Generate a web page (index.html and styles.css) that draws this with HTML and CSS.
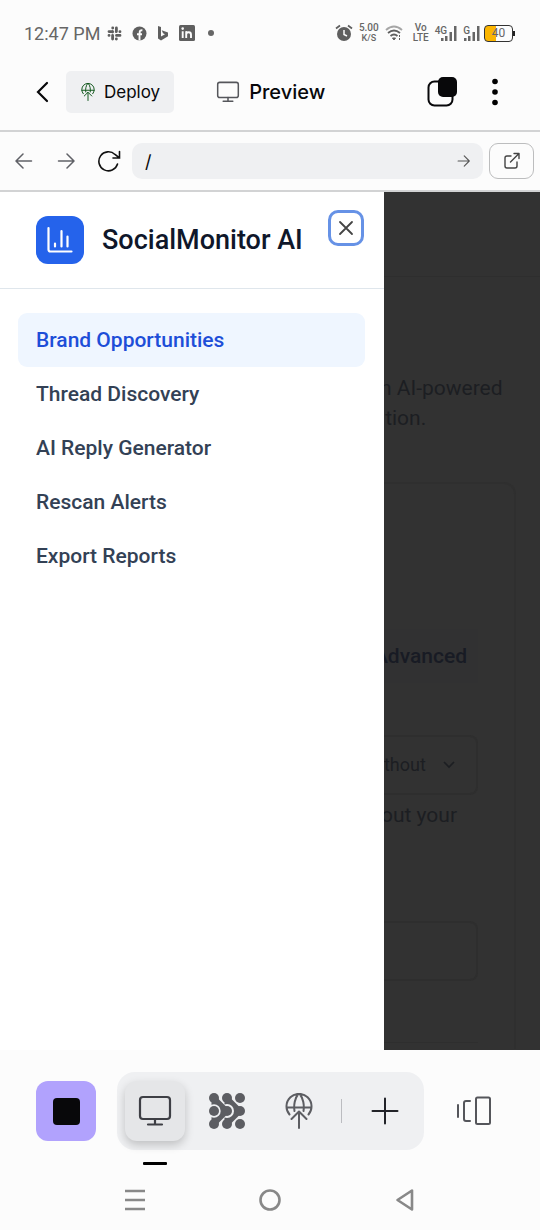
FILE: index.html
```html
<!DOCTYPE html>
<html lang="en">
<head>
<meta charset="utf-8">
<meta name="viewport" content="width=device-width, initial-scale=1">
<title>SocialMonitor AI</title>
<link rel="stylesheet" href="styles.css">
</head>
<body>
<svg class="defs" aria-hidden="true">
  <symbol id="monitor" viewBox="0 0 34 32"><g fill="none" stroke="currentColor" stroke-width="2.200" stroke-linecap="round"><rect x="2" y="2" width="30" height="22" rx="3"/><path d="M17 24v5M10 29.500h14"/></g></symbol>
  <symbol id="globe" viewBox="0 0 28 36"><g fill="none" stroke="currentColor" stroke-width="2" stroke-linecap="round" stroke-linejoin="round"><path d="M4.500 21.500A12.500 12.500 0 1 1 23.500 21.500M1.500 14.500h25M9.500 18C8.500 12 10 5 13 1.500M18.500 18C19.500 12 18 5 15 1.500M14 35V19M6.500 26l7.500-7.500 7.500 7.500"/></g></symbol>
  <symbol id="arrow" viewBox="0 0 18 16"><path d="M1.500 8h15M10 1l7 7-7 7" fill="none" stroke="currentColor" stroke-width="1.500" stroke-linecap="round" stroke-linejoin="round"/></symbol>
</svg>

<div class="status">
  <div class="status-side">
    <span class="clock">12:47 PM</span>
    <svg width="15" height="15" viewBox="0 0 15 15" fill="none" stroke="currentColor" stroke-width="2.800" stroke-linecap="round"><path d="M5.600 5.600V6M2 5.600h3.500M5.700 2h.1M9.400 2v3.500M9.300 5.700h-.1M13 5.700h-.1M13 9.400H9.500M9.400 13h-.1M5.600 13V9.500M2 9.400h.1"/></svg>
    <svg width="15" height="15" viewBox="0 0 15 15"><circle cx="7.500" cy="7.500" r="7" fill="currentColor"/><path d="M7.500 14.500V8M5 8.200h5M7.700 8V6q0-2 2.700-1.700" fill="none" stroke="#fcfcfc" stroke-width="1.900"/></svg>
    <svg width="12" height="15" viewBox="0 0 12 15"><path d="M1 0l3 1v9.500l4-2.200-2-1-1.300-3L11 6.500v3.800L4 14.500l-3-2z" fill="currentColor"/></svg>
    <svg width="16" height="16" viewBox="0 0 16 16"><rect width="16" height="16" rx="1.500" fill="currentColor"/><path d="M3.700 6.200V13M7.200 6.200V13M7.200 9.500q0-2.300 2.600-2.300 2.200 0 2.200 2.500V13" fill="none" stroke="#fcfcfc" stroke-width="1.900"/><circle cx="3.700" cy="3.600" r="1.300" fill="#fcfcfc"/></svg>
    <i class="dot"></i>
  </div>
  <div class="status-side status-right">
    <svg width="18" height="18" viewBox="0 0 18 18"><circle cx="9" cy="10" r="7" fill="currentColor"/><path d="M1 4.500l4-3M17 4.500l-4-3" stroke="currentColor" stroke-width="1.800"/><path d="M9 6v4.500l3 1.500" fill="none" stroke="#fcfcfc" stroke-width="1.500"/></svg>
    <span class="tiny"><b>5.00</b><b class="unit">K/S</b></span>
    <svg width="18" height="16" viewBox="0 0 18 16" fill="none" stroke="currentColor" stroke-width="1.800"><path d="M1 5q8-7 16 0" opacity=".55"/><path d="M3 8q6-5 12 0M5.500 11q3.500-3 7 0"/><path d="M7.500 13h3L9 15zM14.500 10v2M14.500 13v2" fill="currentColor" stroke-width="1"/></svg>
    <span class="tiny volte"><b>Vo</b><b>LTE</b></span>
    <span class="signal"><b>4G</b><svg width="18" height="15" viewBox="0 0 18 15" fill="currentColor"><path d="M2 12h2.500v3H2zM6 10h2.500v5H6zM10.500 6H13v9h-2.500zM15 0h2.500v15H15z"/></svg></span>
    <span class="signal"><b>G</b><svg width="18" height="15" viewBox="0 0 18 15" fill="currentColor"><path d="M2 12h2.500v3H2zM6 10h2.500v5H6zM10.500 6H13v9h-2.500zM15 0h2.500v15H15z"/></svg></span>
    <span class="battery">40</span>
  </div>
</div>

<header class="topbar">
  <button class="plain back" aria-label="Back"><svg width="14" height="22" viewBox="0 0 14 22"><path d="M12 2L3 11l9 9" fill="none" stroke="#08080a" stroke-width="2.200" stroke-linecap="round"/></svg></button>
  <button class="deploy"><svg class="deploy-icon" viewBox="0 0 28 36"><use href="#globe"/></svg>Deploy</button>
  <button class="plain preview"><svg width="24" height="22"><use href="#monitor"/></svg>Preview</button>
  <button class="plain tabs" aria-label="Tabs"><svg width="30" height="30" viewBox="0 0 30 30"><rect x="1.500" y="4.500" width="24" height="24" rx="6" fill="none" stroke="#08080a" stroke-width="2"/><rect x="11" y="0" width="19" height="20" rx="5" fill="#08080a"/></svg></button>
  <button class="plain" aria-label="More"><svg width="8" height="28" viewBox="0 0 8 28"><circle cx="4" cy="3.500" r="2.800"/><circle cx="4" cy="14" r="2.800"/><circle cx="4" cy="24.500" r="2.800"/></svg></button>
</header>

<form class="browserbar">
  <button type="button" class="plain nav-arrow" aria-label="Previous page"><svg class="flip" width="18" height="16"><use href="#arrow"/></svg></button>
  <button type="button" class="plain nav-arrow" aria-label="Next page"><svg width="18" height="16"><use href="#arrow"/></svg></button>
  <button type="button" class="plain reload" aria-label="Reload"><svg width="24" height="22" viewBox="0 0 24 22" fill="none" stroke="#111" stroke-width="1.600" stroke-linecap="round"><path d="M20.500 14A9.500 9.500 0 1 1 18 4.500L22.500 8M22.500 1.500V8H16"/></svg></button>
  <div class="address">
    <input type="text" value="/" aria-label="Address">
    <button type="button" class="plain go" aria-label="Go"><svg width="13" height="12"><use href="#arrow"/></svg></button>
  </div>
  <button type="button" class="external" aria-label="Open in new window"><svg width="18" height="18" viewBox="0 0 18 18" fill="none" stroke="#444" stroke-width="1.400" stroke-linecap="round" stroke-linejoin="round"><path d="M8 4H4a2 2 0 0 0-2 2v8a2 2 0 0 0 2 2h8a2 2 0 0 0 2-2v-4M7.500 10L16 1.500M11 1.500h5v5"/></svg></button>
</form>

<div class="stage">
  <aside class="drawer">
    <div class="brand">
      <span class="logo"><svg width="28" height="28" viewBox="0 0 28 28" fill="none" stroke="#fff" stroke-width="2.200" stroke-linecap="round" stroke-linejoin="round"><path d="M2.500 2v21.500a2 2 0 0 0 2 2H25.500M9 17.500v3M15.500 5v15.500M21.500 10.500v10"/></svg></span>
      <h1>SocialMonitor AI</h1>
      <button class="close" aria-label="Close menu"><svg width="16" height="16" viewBox="0 0 16 16"><path d="M2 2l12 12M14 2L2 14" stroke="#444" stroke-width="1.800" stroke-linecap="round"/></svg></button>
    </div>
    <nav class="menu">
      <a class="active" href="#">Brand Opportunities</a>
      <a href="#">Thread Discovery</a>
      <a href="#">AI Reply Generator</a>
      <a href="#">Rescan Alerts</a>
      <a href="#">Export Reports</a>
    </nav>
  </aside>
  <main class="page">
    <div class="page-head"></div>
    <p class="intro">n AI-powered<br>&nbsp;tion.</p>
    <section class="card">
      <span class="tab">Advanced</span>
      <div class="field select"><span>thout</span><svg width="14" height="10" viewBox="0 0 14 10"><path d="M2 2l5 5 5-5" fill="none" stroke="currentColor" stroke-width="1.600"/></svg></div>
      <p class="hint">out your</p>
      <div class="field"></div>
      <hr>
    </section>
  </main>
</div>

<footer class="dock">
  <button class="stop" aria-label="Stop"><i></i></button>
  <div class="tools">
    <button class="tool selected" aria-label="Preview"><svg width="34" height="32"><use href="#monitor"/></svg></button>
    <button class="tool" aria-label="Agent"><svg width="36" height="36" viewBox="0 0 36 36" fill="currentColor">
      <path d="M18 5l13 13-13 13z" stroke="currentColor" stroke-width="5" stroke-linejoin="round"/>
      <circle cx="18" cy="18" r="7" fill="#eff0f2"/>
      <path d="M5 5l13 13L5 31z" stroke="currentColor" stroke-width="5" stroke-linejoin="round"/>
      <circle cx="5" cy="18" r="6.700" fill="#eff0f2"/>
      <path d="M0 9h2v18H0z" fill="#eff0f2"/>
      <circle cx="5" cy="5" r="5"/><circle cx="18" cy="5" r="5"/><circle cx="31" cy="5" r="5"/><circle cx="5" cy="18" r="5"/><circle cx="18" cy="18" r="5"/><circle cx="31" cy="18" r="5"/><circle cx="5" cy="31" r="5"/><circle cx="18" cy="31" r="5"/><circle cx="31" cy="31" r="5"/>
    </svg></button>
    <button class="tool" aria-label="Deploy"><svg width="28" height="36"><use href="#globe"/></svg></button>
    <span class="divider"></span>
    <button class="tool add" aria-label="Add"><svg width="28" height="28" viewBox="0 0 28 28"><path d="M14 1.500v25M1.500 14h25" stroke="#222329" stroke-width="2" stroke-linecap="round"/></svg></button>
  </div>
  <button class="plain panes" aria-label="Switch panes"><svg width="36" height="30" viewBox="0 0 36 30" fill="none" stroke="#55565b" stroke-width="2" stroke-linecap="round" stroke-linejoin="round"><path d="M2 9v12M14 5H10a2 2 0 0 0-2 2v16a2 2 0 0 0 2 2h4"/><rect x="20" y="1.500" width="14" height="26.500" rx="1.500"/></svg></button>
</footer>
<div class="indicator"></div>
<div class="system">
  <button class="plain" aria-label="Recent apps"><svg width="20" height="24" viewBox="0 0 20 24"><path d="M0 3h20M0 12h20M0 21h20" stroke="#888" stroke-width="2.600"/></svg></button>
  <button class="plain" aria-label="Home"><svg width="24" height="24" viewBox="0 0 24 24"><circle cx="12" cy="12" r="9.500" fill="none" stroke="#888" stroke-width="2.600"/></svg></button>
  <button class="plain" aria-label="Back"><svg width="20" height="24" viewBox="0 0 20 24"><path d="M17 2.500v19L2.500 12z" fill="none" stroke="#888" stroke-width="2.600" stroke-linejoin="round"/></svg></button>
</div>
</body>
</html>
```
FILE: styles.css
```css
* { box-sizing: border-box; }
body {
  margin: 0;
  min-height: 100vh;
  display: flex;
  flex-direction: column;
  background: #fcfcfc;
  color: #08080a;
  font-family: Roboto, "Liberation Sans", sans-serif;
}
h1, p { margin: 0; }
button, input { font: inherit; color: inherit; }
button { border: 0; padding: 0; cursor: pointer; }
svg { display: block; flex: none; }
.defs { position: absolute; width: 0; height: 0; }
.plain { background: none; display: flex; align-items: center; justify-content: center; }

.status {
  height: 66px;
  padding: 0 27px 0 24px;
  display: flex;
  align-items: center;
  justify-content: space-between;
  color: #666;
}
.status-side { display: flex; align-items: center; gap: 10px; }
.clock { font-size: 18px; margin-right: -3px; }
.status-side > svg { color: #5f5f5f; }
.dot { width: 6px; height: 6px; border-radius: 50%; background: #666; margin-left: 3px; }
.status-right { gap: 6px; }
.tiny { display: flex; flex-direction: column; font-size: 10px; line-height: 10px; text-align: center; }
.tiny b { font-weight: 500; }
.tiny .unit { font-size: 9px; }
.volte { margin-left: 4px; }
.signal { display: flex; align-items: flex-end; }
.signal b { font-size: 10px; line-height: 10px; font-weight: 500; align-self: flex-start; margin-right: -8px; }
.battery {
  position: relative;
  width: 29px;
  height: 17px;
  margin-left: -2px;
  border: 1px solid #333;
  border-radius: 4px;
  background: linear-gradient(90deg, #fbb500 40%, #fcfcfc 40%);
  font-size: 12px;
  line-height: 15px;
  text-align: center;
}
.battery::after { content: ""; position: absolute; right: -3px; top: 5px; width: 2px; height: 5px; background: #222; }

.topbar { height: 64px; padding: 0 41px 12px 34px; display: flex; align-items: center; }
.back { width: 16px; }
.deploy {
  margin-left: 16px;
  height: 42px;
  padding: 0 14px;
  display: flex;
  align-items: center;
  gap: 8px;
  border-radius: 5px;
  background: #eff0f2;
  font-family: Inter, sans-serif;
  font-size: 17px;
}
.deploy-icon { width: 16px; height: 18px; color: #14591f; }
.preview { margin-left: 42px; gap: 9px; font: 500 20px Inter, sans-serif; }
.preview svg { color: #55565b; }
.tabs { margin-left: auto; margin-right: 34px; }

.browserbar {
  height: 62px;
  padding: 0 6px 0 15px;
  display: flex;
  align-items: center;
  border: solid #d2d3d4;
  border-width: 2px 0;
}
.nav-arrow { width: 18px; margin-right: 24px; color: #606167; }
.flip { transform: scaleX(-1); }
.reload { margin-right: 11px; margin-left: -2px; }
.address {
  flex: 1;
  min-width: 0;
  height: 36px;
  padding: 0 13px;
  display: flex;
  align-items: center;
  border-radius: 10px;
  background: #eff0f2;
}
.address input { flex: 1; min-width: 0; padding: 0; border: 0; outline: 0; background: none; font-family: Inter, sans-serif; font-size: 18px; }
.go { color: #555; }
.external {
  width: 45px;
  height: 36px;
  margin-left: 6px;
  display: flex;
  align-items: center;
  justify-content: center;
  border: 1px solid #bcbdbe;
  border-radius: 9px;
  background: none;
}

.stage { flex: 1; display: flex; min-height: 858px; overflow: hidden; background: #323232; }
.drawer { position: relative; z-index: 1; width: 71.1%; background: #fff; font-size: 21px; line-height: 30px; }
.brand {
  height: 97px;
  padding: 0 20px 0 36px;
  display: flex;
  align-items: center;
  border-bottom: 1px solid #dfe6ec;
}
.logo { width: 48px; height: 48px; display: flex; align-items: center; justify-content: center; border-radius: 12px; background: #2563eb; }
.brand h1 { margin-left: 18px; font-size: 27px; line-height: 36px; font-weight: 500; color: #0f172a; white-space: nowrap; }
.close {
  width: 36px;
  height: 36px;
  margin: 18px 0 0 auto;
  align-self: flex-start;
  display: flex;
  align-items: center;
  justify-content: center;
  border: 3px solid #6692e6;
  border-radius: 10px;
  background: #fff;
}
.menu { padding: 24px 19px 0 18px; display: flex; flex-direction: column; }
.menu a { padding: 12px 18px; border-radius: 9px; color: #334155; font-weight: 500; text-decoration: none; }
.menu .active { background: #eff6ff; color: #1d4ed8; }

.page { flex: 1; min-width: 0; margin-left: -10px; color: #1c1e22; font-size: 21px; line-height: 30px; }
.page-head { height: 85px; border-bottom: 1px solid #2e2e2e; }
.intro { margin-top: 96px; padding-left: 6px; white-space: nowrap; }
.card { margin: 49px 24px 0 0; height: 567px; padding: 145px 36px 0 0; border: 2px solid #2f2f2f; border-left: 0; border-bottom: 0; border-top-right-radius: 12px; }
.tab { display: block; height: 54px; margin-bottom: 52px; padding: 12px 0; background: #313132; color: #181b24; font-weight: 500; }
.field { height: 60px; border: 2px solid #2e2e2e; border-left: 0; border-radius: 0 8px 8px 0; }
.select { display: flex; align-items: center; justify-content: space-between; padding: 0 20px 0 10px; font-size: 18px; }
.hint { margin: 5px 0 91px; padding-left: 7px; }
.card hr { margin: 61px 0 0; border: 0; border-top: 1px solid #2e2e2e; }

.dock { padding: 22px 48px 0 36px; display: flex; align-items: center; }
.stop { width: 60px; height: 60px; display: flex; align-items: center; justify-content: center; border-radius: 12px; background: #b1a2fd; }
.stop i { width: 27px; height: 27px; border-radius: 4px; background: #08080a; }
.tools { height: 78px; margin-left: 21px; padding: 0 9px 0 8px; display: flex; align-items: center; border-radius: 18px; background: #eff0f2; }
.tool { width: 60px; height: 60px; margin-right: 12px; display: flex; align-items: center; justify-content: center; border-radius: 12px; background: none; color: #5c5d62; }
.selected { background: #e5e6e8; color: #3e3f45; box-shadow: 0 4px 10px #0003; }
.divider { width: 1px; height: 24px; margin: 0 13px 0 0; background: #bbbcc0; }
.add { margin-right: 0; }
.panes { margin-left: auto; }
.indicator { width: 24px; height: 3px; margin: 12px 0 0 143px; border-radius: 1px; background: #000; }
.system { padding: 23px 0 18px; display: flex; justify-content: center; gap: 113px; }
```
